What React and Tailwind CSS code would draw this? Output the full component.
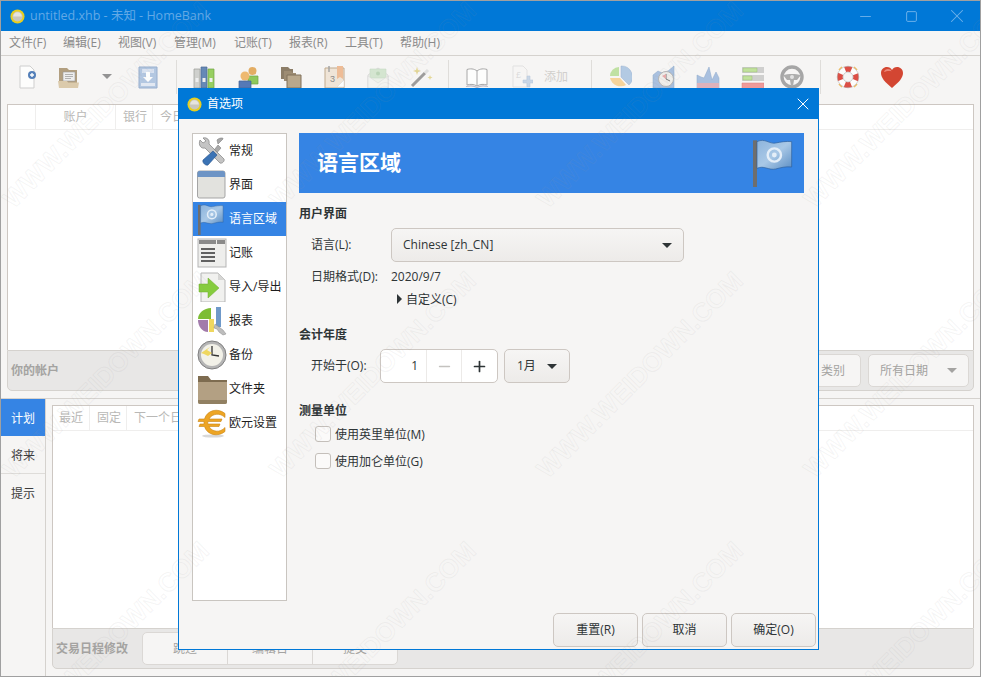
/**
 * App.jsx - HomeBank, janela principal com o diálogo de preferências aberto.
 */
import { X, Minus, Square, Plus } from 'lucide-react'

const FONT = "font-['Open_Sans','Noto_Sans_CJK_SC',sans-serif]"

function Logo() {
  return (
    <svg width="15" height="15" viewBox="0 0 16 16" className="shrink-0">
      <circle cx="8" cy="8" r="7.5" fill="#e8cf1e" />
      <circle cx="8" cy="8" r="5.4" fill="#c9c6bd" />
      <path d="M3.4 8a4.6 4.6 0 0 1 9.2 0z" fill="#e6e4de" />
    </svg>
  )
}

function Tri({ className = '' }) {
  return <span className={`block w-0 h-0 border-x-[5px] border-x-transparent border-t-[5px] ${className}`} />
}

/* ícones da barra de ferramentas */
const toolIcons = {
  novo: (
    <>
      <path d="M5 1h10l4 4v18H5z" fill="#fff" stroke="#c9c9c9" />
      <circle cx="17" cy="10" r="4" fill="#3a6db0" />
      <path d="M17 8v4M15 10h4" stroke="#fff" strokeWidth="1.4" />
    </>
  ),
  abrir: (
    <>
      <path d="M2 3h8l2 2h8v17H2z" fill="#a8926d" />
      <path d="M6 7h12v9H6z" fill="#eee" stroke="#8d8d8d" strokeWidth=".6" />
      <path d="M8 9.500h8M8 11.500h8M8 13.500h6" stroke="#888" strokeWidth=".7" />
      <path d="M1 16h9l1 1.500h11l-1 5.500H2z" fill="#d8c4a0" />
    </>
  ),
  salvar: (
    <>
      <path d="M3 2h18v21H3z" fill="#a9c0de" stroke="#8aa5c8" />
      <path d="M6 4h12v4H6z" fill="#d5e1f0" />
      <path d="M10 7h4v5h3l-5 5-5-5h3z" fill="#fff" />
      <path d="M5 18h14v3H5z" fill="#dfe7f2" />
    </>
  ),
  contas: (
    <>
      <path d="M2 4h6v19H2z" fill="#c9cbc7" stroke="#8c8f8a" strokeWidth=".7" />
      <path d="M9 2h6v21H9z" fill="#4f78ad" stroke="#2f5387" strokeWidth=".7" />
      <path d="M16 4h6v19h-6z" fill="#88c94a" stroke="#5c9a28" strokeWidth=".7" />
      <path d="M3.500 13h3v4h-3zM10.500 13h3v4h-3zM17.500 13h3v4h-3z" fill="#eee" />
    </>
  ),
  pessoas: (
    <>
      <circle cx="16.500" cy="6" r="4" fill="#e2a24c" />
      <path d="M12 11h10v8H12z" fill="#7fc241" stroke="#5c9a28" strokeWidth=".7" />
      <circle cx="9" cy="11" r="4.500" fill="#eeb05a" />
      <path d="M3 16h12v7H3z" fill="#3b66ad" stroke="#254b87" strokeWidth=".7" />
    </>
  ),
  categorias: (
    <>
      <path d="M2 2h7l2 2h3v10H2z" fill="#7b6a50" />
      <path d="M5 6h7l2 2h3v8H5z" fill="#8f7c5f" />
      <path d="M8 10h14v13H8z" fill="#b09c7c" stroke="#6f5d43" />
    </>
  ),
  agenda: (
    <>
      <path d="M2 3h19v20H2z" fill="#efe3d3" stroke="#b89f80" />
      <path d="M14 1h6v13l-3-2-3 2z" fill="#eeb488" />
      <path d="M6 1v6" stroke="#999" strokeWidth="1.500" />
      <text x="7" y="17" fontSize="9" fill="#777" fontFamily="Liberation Sans">3</text>
      <path d="M14 22l7-7v7z" fill="#fff" stroke="#ccc" strokeWidth=".5" />
    </>
  ),
  envelope: (
    <>
      <path d="M2 10l10-7 10 7v13H2z" fill="#e6efe3" stroke="#c8c8c8" />
      <path d="M4 4h16v9H4z" fill="#bcdcb8" stroke="#9cc398" strokeWidth=".5" />
      <circle cx="12" cy="8.500" r="2" fill="#8fbe8a" />
      <path d="M2 11l10 7 10-7v12H2z" fill="#f0f3ee" stroke="#c8c8c8" strokeWidth=".6" />
    </>
  ),
  varinha: (
    <>
      <path d="M3 21L16 8" stroke="#8f8f8f" strokeWidth="3" />
      <path d="M16 8l3-3" stroke="#ddd" strokeWidth="3" />
      <path d="M8 2l1 3 3 1-3 1-1 3-1-3-3-1 3-1zM21 10l.7 1.800 1.800.7-1.800.7-.7 1.800-.7-1.800-1.800-.7 1.800-.7z" fill="#e3d489" />
    </>
  ),
  livro: (
    <>
      <path d="M12 6C9 3.500 5 3.500 2 4.500V20c3-1 7-1 10 1 3-2 7-2 10-1V4.500C19 3.500 15 3.500 12 6z" fill="#fff" stroke="#9c9c9c" />
      <path d="M12 6v15" stroke="#9c9c9c" />
      <path d="M1 21.500c4-1 8-1 11 1 3-2 7-2 11-1" fill="none" stroke="#b8b3c0" strokeWidth="1.200" />
    </>
  ),
  docAdd: (
    <>
      <path d="M4 1h10l4 4v17H4z" fill="#f7f7f7" stroke="#d5d5d5" />
      <text x="7" y="13" fontSize="9" fill="#c9c9c9" fontFamily="Liberation Sans">£</text>
      <path d="M14 15h4v-4 0h3v4h3v3h-3v4h-3v-4h-4z" fill="#a8c1de" stroke="#86a4c8" strokeWidth=".5" />
    </>
  ),
  pizza: (
    <>
      <path d="M11 2v9H2a9 9 0 0 1 9-9z" fill="#b9de96" />
      <path d="M13 1a11 11 0 0 1 8 19l-8-8z" fill="#a9c4e2" stroke="#8ca9cb" strokeWidth=".5" />
      <path d="M2 13h10l6 7a11 11 0 0 1-16-7z" fill="#f7d08e" />
    </>
  ),
  tempo: (
    <>
      <path d="M1 23V10l5-4 4 2 6-2 6-5v22z" fill="#9db9dc" stroke="#7d9cc4" strokeWidth=".5" />
      <circle cx="14" cy="14" r="7.500" fill="#efeeea" stroke="#aaa" />
      <path d="M14 14V9M14 14l4 2" stroke="#666" />
      <path d="M10 11l4 3V9z" fill="#e8a0a0" />
    </>
  ),
  saldo: (
    <>
      <path d="M1 23V10l4 2 3 1 5-11 3 13 4-8 3 6v10z" fill="#9db9dc" stroke="#7d9cc4" strokeWidth=".5" />
      <path d="M1 18h22v5H1z" fill="#dba8b2" />
    </>
  ),
  orcamento: (
    <>
      <path d="M2 2h22v6H2z" fill="#c9c9c9" />
      <path d="M3 3h14v4H3z" fill="#b9de8f" stroke="#8db765" strokeWidth=".5" />
      <path d="M2 10h22v6H2z" fill="#c9c9c9" />
      <path d="M3 11h9v4H3z" fill="#b9de8f" stroke="#8db765" strokeWidth=".5" />
      <path d="M2 18h22v6H2z" fill="#ee8c8c" stroke="#d86a6a" strokeWidth=".5" />
    </>
  ),
  volante: (
    <>
      <circle cx="12" cy="12" r="10" fill="none" stroke="#9a9a9a" strokeWidth="3.400" />
      <path d="M3 10c5-1.500 13-1.500 18 0l-4 5h-3l-1 6h-2l-1-6H7z" fill="#a3a3a3" />
      <circle cx="12" cy="12" r="2" fill="#dedede" />
    </>
  ),
  boia: (
    <>
      <path d="M3 5l3-3M21 5l-3-3M3 19l3 3M21 19l-3 3" stroke="#eeb54d" strokeWidth="1.600" />
      <circle cx="12" cy="12" r="8" fill="none" stroke="#fff" strokeWidth="5.500" />
      <circle cx="12" cy="12" r="8" fill="none" stroke="#d9352a" strokeWidth="5.500" strokeDasharray="6.280 6.280" strokeDashoffset="3.140" />
      <circle cx="12" cy="12" r="5" fill="#f6f5f4" stroke="#9b9b9b" strokeWidth=".5" />
      <circle cx="12" cy="12" r="10.800" fill="none" stroke="#9b9b9b" strokeWidth=".5" />
    </>
  ),
  coracao: (
    <>
      <path d="M12 23C5 17 1 13 1 8c0-3.500 2.700-6 6-6 2.200 0 4 1 5 3 1-2 2.800-3 5-3 3.300 0 6 2.500 6 6 0 5-4 9-11 15z" fill="#cf2a12" />
      <path d="M4 7c.5-2 2-3 4-3 1.500 0 3 .8 3.500 2.200C9 5.600 6 6 4 7z" fill="#ea7565" />
    </>
  ),
}

function ToolIcon({ name, size = 24, className = '' }) {
  return (
    <svg width={size} height={size} viewBox="0 0 24 24" className={className}>
      {toolIcons[name]}
    </svg>
  )
}

function ToolBtn({ name, width, dim = false, size = 24 }) {
  return (
    <div className={`flex items-center justify-center shrink-0 ${width}`}>
      <ToolIcon name={name} size={size} className={dim ? 'opacity-60' : 'opacity-90'} />
    </div>
  )
}

function ToolSep({ className = '' }) {
  return <div className={`w-px h-[34px] bg-[#dedcd9] shrink-0 ${className}`} />
}

function Toolbar() {
  return (
    <div className="flex items-center h-[48px] shrink-0 pb-[7px] opacity-95">
      <ToolBtn name="novo" width="w-[52px]" />
      <ToolBtn name="abrir" width="w-[32px]" />
      <div className="w-[44px] flex justify-center shrink-0">
        <Tri className="border-t-[#8e8e8e]" />
      </div>
      <ToolBtn name="salvar" width="w-[38px]" />
      <ToolSep className="ml-[9px]" />
      <ToolBtn name="contas" width="w-[44px] ml-[5px]" />
      <ToolBtn name="pessoas" width="w-[43px]" />
      <ToolBtn name="categorias" width="w-[44px]" />
      <ToolBtn name="agenda" width="w-[43px]" />
      <ToolBtn name="envelope" width="w-[43px]" dim />
      <ToolBtn name="varinha" width="w-[44px]" />
      <ToolSep className="ml-[5px]" />
      <ToolBtn name="livro" width="w-[44px] ml-[6px]" />
      <ToolBtn name="docAdd" width="w-[44px]" dim />
      <span className="w-[48px] text-[12px] text-[#d0cecb] shrink-0 pl-[1px]">添加</span>
      <ToolSep />
      <ToolBtn name="pizza" width="w-[44px] ml-[6px]" />
      <ToolBtn name="tempo" width="w-[44px]" />
      <ToolBtn name="saldo" width="w-[44px]" />
      <ToolBtn name="orcamento" width="w-[44px]" />
      <ToolBtn name="volante" width="w-[36px]" />
      <ToolSep className="ml-[10px]" />
      <ToolBtn name="boia" width="w-[44px] ml-[5px]" />
      <ToolBtn name="coracao" width="w-[44px]" />
    </div>
  )
}

/* ícones da lista de preferências */
const prefIcons = {
  geral: (
    <>
      <path d="M26 3l-5 5-1-4c3-3 7-2 6-1zM8 26L21 9l3 3L10 28z" fill="#a8a8a8" stroke="#7f7f7f" strokeWidth=".6" />
      <path d="M3 4l3 3 3-2-3-3c4-1 7 2 6 6l15 15c1 2-2 5-4 4L8 12C4 13 1 9 3 4z" fill="#c4c4c4" stroke="#808080" strokeWidth=".7" />
      <path d="M16 15l4 4-9 10c-2 1-6-2-5-5z" fill="#3b73b5" stroke="#25528c" strokeWidth=".6" />
    </>
  ),
  interface: (
    <>
      <rect x=".5" y="1" width="27.500" height="27" rx="2" fill="#e2e2de" stroke="#a5a5a5" />
      <path d="M.5 3a2 2 0 0 1 2-2h23.500a2 2 0 0 1 2 2v4H.5z" fill="#6d94c5" />
    </>
  ),
  registro: (
    <>
      <rect x="1" y="1" width="28" height="28" fill="#eeeeec" stroke="#b5b5b5" />
      <path d="M2 2h17v4H2zM20 2h8v4h-8z" fill="#8a8a8a" />
      <path d="M4 11h14M4 15h14M4 19h14M4 23h14" stroke="#333" strokeWidth="1.400" />
    </>
  ),
  importar: (
    <>
      <path d="M4 1h17l7 7v22H4z" fill="#f1f1ef" stroke="#b5b5b5" />
      <path d="M21 1v7h7z" fill="#d6d6d4" />
      <path d="M2 12h9V6l11 10-11 10v-6H2z" fill="#86cc3e" stroke="#6ead2f" strokeWidth=".5" />
    </>
  ),
  relatorio: (
    <>
      <path d="M19 1h5v20h-5z" fill="#6f99c9" />
      <path d="M12 13h5v13h-5z" fill="#efd75f" />
      <path d="M14 2v11H1C1 7 7 2 14 2z" fill="#7dbd33" />
      <path d="M1 14h10v12C5 26 1 20 1 14z" fill="#a27bab" />
      <path d="M18 18l8 6 3 4-3 1-4-3-2-3-3-1 1-4z" fill="#bdbdbd" stroke="#888" strokeWidth=".5" />
    </>
  ),
  backup: (
    <>
      <circle cx="15" cy="15" r="14" fill="#b5b5b5" stroke="#808080" />
      <circle cx="15" cy="15" r="11" fill="#f2f1e8" />
      <path d="M15 6v9l7 1" stroke="#333" strokeWidth="1.300" fill="none" />
      <path d="M4 13l9-6-3 3 5 3-4 3-4-2z" fill="#efd75f" />
    </>
  ),
  pastas: (
    <>
      <path d="M1 2h10l3 4h16v22H1z" fill="#7e6c50" />
      <path d="M1 8h29v20a2 2 0 0 1-2 2H3a2 2 0 0 1-2-2z" fill="#b3a083" />
      <path d="M1 26h29v2a2 2 0 0 1-2 2H3a2 2 0 0 1-2-2z" fill="#918062" />
    </>
  ),
  euro: (
    <>
      <ellipse cx="16" cy="28" rx="11" ry="1.600" fill="#d8d8d8" />
      <path d="M28 5.500C21-.5 10 2 7.500 11H2l-1 2.500h6V16H3l-1 2.500h5.500C10 27 21 29.500 28 23.500v-4c-5 5.500-13 4.500-16-1h10l1-2.500H10.800v-2.500H24L25 11H12c3-5.500 11-6.500 16-1.500z" fill="#eda524" stroke="#c98414" strokeWidth=".6" />
    </>
  ),
}

function Flag({ size = 30 }) {
  return (
    <svg width={size} height={size * 1.2} viewBox="0 0 30 36" className="shrink-0">
      <defs>
        <linearGradient id="flag-cor" x1="0" y1="0" x2="1" y2="1">
          <stop offset="0" stopColor="#8db4dc" />
          <stop offset=".5" stopColor="#a9c8e6" />
          <stop offset="1" stopColor="#5d8fc4" />
        </linearGradient>
      </defs>
      <path d="M0 1h3v35H0z" fill="#6e6e6e" />
      <path d="M3 2c6-3 9 2 14 1 4-.8 8-1.500 12-1v19c-5-.5-8 .5-12 1.500-5 1.200-9-3-14-.5z" fill="url(#flag-cor)" stroke="#2f5f9a" strokeWidth=".5" />
      <circle cx="16" cy="12" r="5" fill="none" stroke="#e4eef8" strokeWidth="1.800" />
      <circle cx="16" cy="12" r="1.800" fill="#e4eef8" />
    </svg>
  )
}

const prefItems = [
  { icon: 'geral', label: '常规' },
  { icon: 'interface', label: '界面' },
  { icon: 'flag', label: '语言区域', ativo: true },
  { icon: 'registro', label: '记账' },
  { icon: 'importar', label: '导入/导出' },
  { icon: 'relatorio', label: '报表' },
  { icon: 'backup', label: '备份' },
  { icon: 'pastas', label: '文件夹' },
  { icon: 'euro', label: '欧元设置' },
]

function PrefList() {
  return (
    <div className="w-[95px] h-[468px] shrink-0 bg-white border border-[#c9c5c0] overflow-hidden">
      {prefItems.map((item) => (
        <div
          key={item.label}
          className={`flex items-center h-[34px] gap-[2px] pl-[4px] text-[12px] whitespace-nowrap ${
            item.ativo ? 'bg-[#3584e4] text-white' : 'text-[#1e1e1e]'
          }`}
        >
          {item.icon === 'flag' ? (
            <span className="flex w-[30px] h-[31px] pl-[1px] shrink-0 overflow-hidden">
              <Flag size={26} />
            </span>
          ) : (
            <svg width="30" height="30" viewBox="0 0 30 30" className="shrink-0">
              {prefIcons[item.icon]}
            </svg>
          )}
          <span>{item.label}</span>
        </div>
      ))}
    </div>
  )
}

function SectionTitle({ children, className = '' }) {
  return <div className={`h-[16px] leading-[18px] text-[12px] font-bold text-[#2e3436] ${className}`}>{children}</div>
}

function ComboBtn({ children, className = '' }) {
  return (
    <div
      className={`flex items-center justify-between h-[34px] rounded-[5px] border border-[#cdc7c2] bg-linear-to-b from-[#f6f5f4] to-[#edebe9] text-[12px] text-[#2e3436] shrink-0 ${className}`}
    >
      {children}
    </div>
  )
}

function CheckRow({ label, className = '' }) {
  return (
    <div className={`flex items-center h-[16px] pl-[16px] gap-[4px] text-[12px] text-[#2e3436] ${className}`}>
      <span className="w-[16px] h-[16px] rounded-[3px] border border-[#c4bfba] bg-[#fbfaf9] shrink-0" />
      <span className="pt-[2px]">{label}</span>
    </div>
  )
}

function LocalePage() {
  return (
    <div className="w-[505px] shrink-0">
      <div className="flex items-center justify-between h-[60px] bg-[#3584e4] pl-[18px] pr-[11px]">
        <span className="text-[21px] font-bold text-white">语言区域</span>
        <Flag size={40} />
      </div>

      <SectionTitle className="mt-[12px]">用户界面</SectionTitle>
      <div className="flex items-center mt-[7px] pl-[12px] text-[12px] text-[#2e3436]">
        <span className="w-[80px] shrink-0">语言(L):</span>
        <ComboBtn className="w-[293px] pl-[11px] pr-[11px]">
          <span>Chinese [zh_CN]</span>
          <Tri className="border-t-[#2e3436]" />
        </ComboBtn>
      </div>
      <div className="flex items-center h-[16px] mt-[7px] pl-[12px] text-[12px] text-[#2e3436]">
        <span className="w-[80px] shrink-0">日期格式(D):</span>
        <span>2020/9/7</span>
      </div>
      <div className="flex items-center h-[16px] mt-[6px] pl-[98px] gap-[4px] text-[12px] text-[#2e3436]">
        <span className="w-0 h-0 border-y-[5px] border-y-transparent border-l-[5px] border-l-[#2e3436]" />
        <span className="pt-[2px]">自定义(C)</span>
      </div>

      <SectionTitle className="mt-[19px]">会计年度</SectionTitle>
      <div className="flex items-center mt-[7px] pl-[12px] text-[12px] text-[#2e3436]">
        <span className="w-[69px] shrink-0">开始于(O):</span>
        <div className="flex h-[34px] w-[118px] rounded-[5px] border border-[#cdc7c2] bg-white overflow-hidden">
          <span className="flex items-center justify-end w-[46px] pr-[8px] border-r border-[#eceae8]">1</span>
          <span className="flex items-center justify-center w-[35px] border-r border-[#eceae8] text-[#c4c2bf]">
            <Minus size={17} strokeWidth={2} />
          </span>
          <span className="flex items-center justify-center flex-1 text-[#2e3436]">
            <Plus size={17} strokeWidth={2.400} />
          </span>
        </div>
        <ComboBtn className="w-[66px] ml-[6px] pl-[12px] pr-[12px]">
          <span>1月</span>
          <Tri className="border-t-[#2e3436]" />
        </ComboBtn>
      </div>

      <SectionTitle className="mt-[19px]">测量单位</SectionTitle>
      <CheckRow label="使用英里单位(M)" className="mt-[8px]" />
      <CheckRow label="使用加仑单位(G)" className="mt-[11px]" />
    </div>
  )
}

function DialogBtn({ children }) {
  return (
    <div className="flex items-center justify-center w-[85px] h-[34px] rounded-[5px] border border-[#cdc7c2] bg-linear-to-b from-[#f6f5f4] to-[#edebe9] text-[12px] text-[#2e3436]">
      {children}
    </div>
  )
}

function Dialog() {
  return (
    <div className="absolute left-[177px] top-[87px] w-[641px] h-[562px] flex flex-col border border-[#0078d7] bg-[#f6f5f4] z-10">
      <div className="flex items-center h-[30px] shrink-0 bg-[#0078d7] pl-[8px] gap-[5px] text-[12px] text-white">
        <Logo />
        <span className="flex-1">首选项</span>
        <X size={20} strokeWidth={1.200} className="mr-[5px]" />
      </div>
      <div className="flex gap-[12px] pl-[13px] pt-[14px]">
        <PrefList />
        <LocalePage />
      </div>
      <div className="flex justify-end gap-[4px] pr-[2px] mt-[12px]">
        <DialogBtn>重置(R)</DialogBtn>
        <DialogBtn>取消</DialogBtn>
        <DialogBtn>确定(O)</DialogBtn>
      </div>
    </div>
  )
}

const menus = [
  { label: '文件(F)', width: 'w-[54px]' },
  { label: '编辑(E)', width: 'w-[55px]' },
  { label: '视图(V)', width: 'w-[56px]' },
  { label: '管理(M)', width: 'w-[60px]' },
  { label: '记账(T)', width: 'w-[55px]' },
  { label: '报表(R)', width: 'w-[56px]' },
  { label: '工具(T)', width: 'w-[55px]' },
  { label: '帮助(H)', width: 'w-[60px]' },
]

function TitleBar() {
  return (
    <div className="flex items-center h-[30px] shrink-0 bg-[#0078d7] pl-[9px] gap-[5px] text-[12.500px] text-[#62a9e6]">
      <Logo />
      <span className="flex-1">untitled.xhb - 未知 - HomeBank</span>
      <div className="flex items-center text-[#6db1ea]">
        <span className="flex justify-center w-[46px]">
          <Minus size={17} strokeWidth={1.300} />
        </span>
        <span className="flex justify-center w-[46px]">
          <Square size={13} strokeWidth={1.800} />
        </span>
        <span className="flex justify-center w-[46px]">
          <X size={22} strokeWidth={1.100} />
        </span>
      </div>
    </div>
  )
}

function HeaderCell({ children, className = '' }) {
  return (
    <div className={`flex items-center h-full shrink-0 border-r border-[#efeeed] text-[12px] text-[#b9b8b6] ${className}`}>
      {children}
    </div>
  )
}

function AccountsPane() {
  return (
    <div className="mx-[6px] shrink-0">
      <div className="h-[246px] bg-white border border-[#cdc7c2] border-b-0">
        <div className="flex h-[25px] border-b border-[#efeeed]">
          <HeaderCell className="w-[28px]" />
          <HeaderCell className="w-[80px] justify-center">账户</HeaderCell>
          <HeaderCell className="w-[37px] pl-[7px]">银行</HeaderCell>
          <HeaderCell className="w-[60px] pl-[7px]">今日</HeaderCell>
        </div>
      </div>
      <div className="flex items-center justify-between h-[41px] bg-[#e8e7e6] border border-[#d5d2ce] rounded-b-[5px] pl-[3px] pr-[4px]">
        <span className="text-[12px] font-bold text-[#a4a3a1]">你的帐户</span>
        <div className="flex items-center gap-[7px] text-[12px] text-[#a4a3a1]">
          <div className="flex items-center justify-end w-[70px] h-[33px] pr-[15px] rounded-[5px] border border-[#dbd8d5] bg-[#f6f5f4]">类别</div>
          <div className="flex items-center justify-between w-[101px] h-[33px] px-[11px] rounded-[5px] border border-[#dbd8d5] bg-[#f6f5f4]">
            <span>所有日期</span>
            <Tri className="border-t-[#a4a3a1]" />
          </div>
        </div>
      </div>
    </div>
  )
}

function SchedulePane() {
  return (
    <div className="flex flex-1 mt-[7px] border-t border-[#d5d2ce] min-h-0">
      <div className="w-[45px] shrink-0 border-r border-[#d5d2ce] text-[12px]">
        <div className="flex items-center justify-center h-[37px] pt-[2px] bg-[#3584e4] text-white">计划</div>
        <div className="flex items-center justify-center h-[38px] pt-[2px] border-b border-[#dedcd9] text-[#3c3c3c]">将来</div>
        <div className="flex items-center justify-center h-[38px] pt-[2px] text-[#3c3c3c]">提示</div>
      </div>
      <div className="flex flex-col flex-1 pt-[6px] px-[6px] pb-[7px] min-w-0">
        <div className="flex-1 bg-white border border-[#cdc7c2] border-b-0">
          <div className="flex h-[25px] border-b border-[#efeeed]">
            <HeaderCell className="w-[37px] pl-[6px]">最近</HeaderCell>
            <HeaderCell className="w-[37px] pl-[7px]">固定</HeaderCell>
            <HeaderCell className="w-[80px] pl-[7px]">下一个日</HeaderCell>
          </div>
        </div>
        <div className="flex items-center h-[41px] bg-[#e8e7e6] border border-[#d5d2ce] rounded-b-[5px] pl-[3px]">
          <span className="w-[86px] text-[12px] font-bold text-[#a4a3a1]">交易日程修改</span>
          <div className="flex h-[33px] rounded-[5px] border border-[#dbd8d5] bg-[#f6f5f4] text-[12px] text-[#a4a3a1]">
            <span className="flex items-center justify-center w-[85px] border-r border-[#dbd8d5]">跳过</span>
            <span className="flex items-center justify-center w-[85px] border-r border-[#dbd8d5]">编辑日</span>
            <span className="flex items-center justify-center w-[84px]">提交</span>
          </div>
        </div>
      </div>
    </div>
  )
}

/* marca d'água por cima de tudo, grade regular de 267 x 270 */
function Watermark() {
  const marcas = []
  for (let linha = 0; linha < 3; linha++) {
    for (let coluna = 0; coluna < 5; coluna++) {
      marcas.push({ x: 105 + coluna * 267, y: 104 + linha * 270 })
    }
  }
  return (
    <div className="absolute inset-0 z-20 overflow-hidden pointer-events-none">
      {marcas.map((m) => (
        <span
          key={`${m.x}-${m.y}`}
          style={{ left: m.x, top: m.y }}
          className="absolute whitespace-nowrap -translate-x-1/2 -translate-y-1/2 -rotate-45 text-[26px] font-bold font-['Liberation_Sans',sans-serif] text-transparent [-webkit-text-stroke:1px_rgba(150,150,150,0.1)]"
        >
          WWW.WEIDOWN.COM
        </span>
      ))}
    </div>
  )
}

export default function App() {
  return (
    <div className={`relative w-[981px] h-[677px] flex flex-col overflow-hidden border border-[#a0a0a0] bg-[#f6f5f4] ${FONT}`}>
      <TitleBar />
      <div className="flex items-center h-[25px] shrink-0 border-b border-[#d5d2ce] pl-[8px] text-[12px] text-[#8a8a8a]">
        {menus.map((m) => (
          <span key={m.label} className={`shrink-0 ${m.width}`}>
            {m.label}
          </span>
        ))}
      </div>
      <Toolbar />
      <AccountsPane />
      <SchedulePane />
      <Dialog />
      <Watermark />
    </div>
  )
}
